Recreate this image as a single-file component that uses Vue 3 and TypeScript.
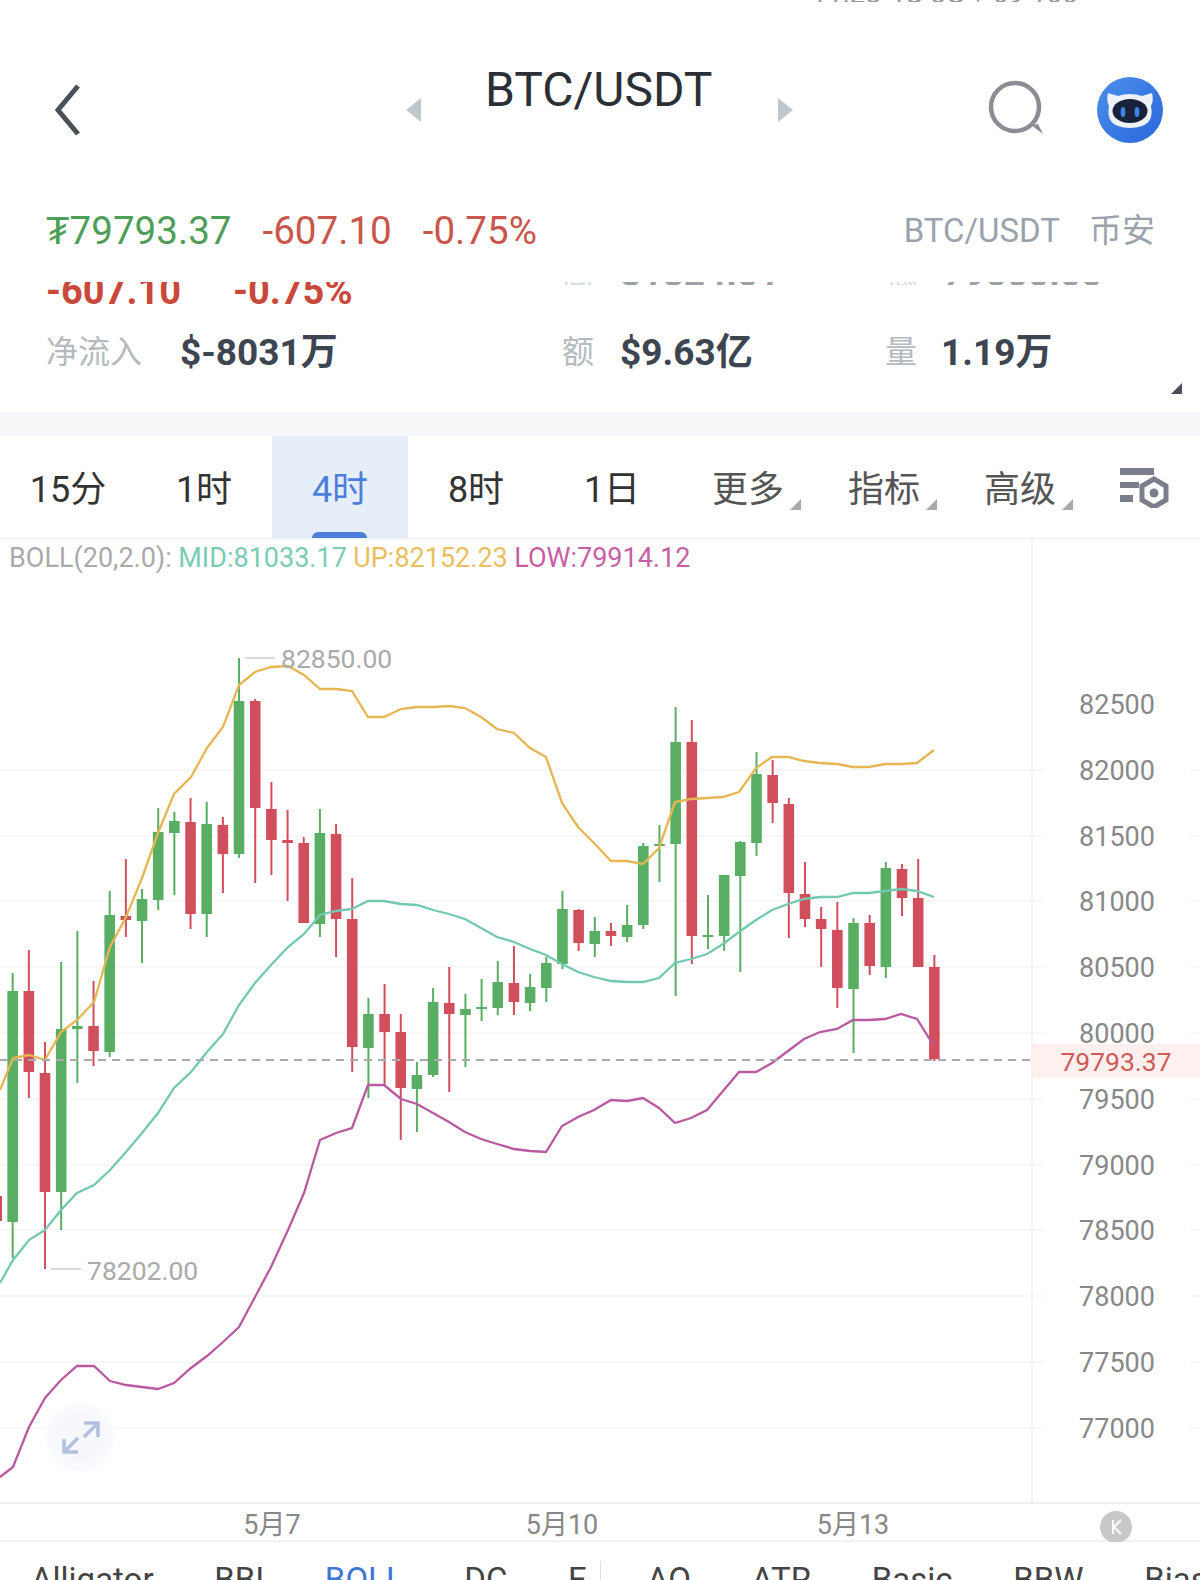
<script setup lang="ts">
type Candle = { x: number; up: boolean; wt: number; bt: number; bh: number; wb: number };

// [up, wick top, body top, body bottom, wick bottom], measured off the chart
type Row = [number, number, number, number, number];

const leftRows: Row[] = [
  [1, 973, 991, 1222, 1258],
  [0, 950, 991, 1072, 1098],
  [0, 1042, 1073, 1192, 1269],
  [1, 962, 1029, 1192, 1230],
  [1, 931, 1026, 1029, 1083],
  [0, 981, 1026, 1051, 1066],
  [1, 891, 915, 1052, 1057],
  [0, 859, 916, 920, 937],
  [1, 889, 899, 921, 963],
  [1, 808, 832, 900, 910],
  [1, 812, 821, 833, 895],
  [0, 798, 822, 914, 929],
  [1, 802, 824, 914, 937],
  [0, 817, 825, 854, 893],
  [1, 658, 701, 854, 858],
  [0, 699, 701, 808, 883],
  [0, 782, 809, 840, 875],
  [0, 810, 840, 843, 901],
  [0, 837, 843, 923, 923],
  [1, 809, 833, 924, 937],
  [0, 824, 834, 919, 957],
  [0, 878, 919, 1047, 1072],
  [1, 998, 1014, 1048, 1098],
  [0, 984, 1014, 1032, 1085],
  [0, 1014, 1032, 1088, 1140],
  [1, 1062, 1075, 1089, 1132],
  [1, 988, 1002, 1075, 1077],
  [0, 967, 1003, 1014, 1092],
  [1, 994, 1009, 1015, 1067],
  [1, 979, 1007, 1008, 1021],
  [1, 961, 982, 1008, 1015],
  [0, 946, 983, 1002, 1015],
];

const rightRows: Row[] = [
  [1, 974, 987, 1003, 1011],
  [1, 957, 963, 988, 1002],
  [1, 891, 909, 964, 969],
  [0, 909, 910, 943, 951],
  [1, 917, 931, 944, 957],
  [0, 923, 931, 936, 946],
  [1, 905, 925, 937, 942],
  [1, 843, 846, 925, 929],
  [1, 825, 844, 846, 882],
  [1, 707, 742, 844, 996],
  [0, 720, 742, 936, 964],
  [1, 895, 935, 936, 949],
  [1, 875, 875, 936, 951],
  [1, 841, 842, 876, 972],
  [1, 752, 774, 843, 856],
  [0, 760, 775, 803, 823],
  [0, 798, 804, 893, 938],
  [0, 862, 894, 919, 927],
  [0, 907, 919, 929, 967],
  [0, 902, 930, 988, 1008],
  [1, 918, 923, 989, 1053],
  [0, 915, 923, 966, 975],
  [1, 862, 868, 967, 978],
  [0, 864, 869, 898, 916],
  [0, 859, 898, 967, 967],
  [0, 955, 967, 1059, 1061],
];

const candles: Candle[] = [...leftRows, ...rightRows].map((r, i) => ({
  x: 12.67 + 16.17 * i,
  up: r[0] === 1,
  wt: r[1],
  bt: r[2],
  bh: r[3] - r[2],
  wb: r[4],
}));

const upper =
  "0,1090 13,1058 29,1055 45,1060 61,1032 77,1020 94,1002 110,947 126,917 142,878 158,833 174,794 191,777 207,748 223,727 239,685 255,672 271,667 288,666 304,675 320,689 336,689 352,691 368,717 384,717 401,709 417,707 433,707 449,706 465,708 481,717 497,729 514,733 530,748 546,757 562,803 578,827 594,843 611,861 627,861 643,864 659,848 675,802 691,799 707,798 723,797 739,792 756,768 772,757 788,757 804,761 820,763 837,764 853,767 869,767 885,764 901,764 917,763 934,750";
const mid =
  "0,1283 13,1260 29,1240 45,1230 61,1210 77,1193 94,1185 110,1170 126,1152 142,1133 158,1113 174,1088 191,1072 207,1052 223,1034 239,1005 255,983 271,965 288,947 304,934 320,915 336,911 352,909 368,901 384,901 401,904 417,905 433,910 449,914 465,919 481,928 497,937 514,942 530,949 546,955 562,964 578,972 594,977 611,981 627,982 643,982 659,978 675,963 691,959 707,954 723,944 739,932 756,920 772,910 788,904 804,899 820,897 837,897 853,893 869,893 885,891 901,889 917,891 934,897";
const lower =
  "0,1477 13,1467 29,1427 45,1398 61,1380 77,1366 94,1366 110,1381 126,1385 142,1387 158,1389 174,1383 191,1368 207,1356 223,1342 239,1327 255,1297 271,1267 288,1230 304,1193 320,1140 336,1133 352,1128 368,1085 384,1085 401,1099 417,1104 433,1113 449,1122 465,1132 481,1139 497,1144 514,1149 530,1151 546,1152 562,1126 578,1117 594,1110 611,1100 627,1101 643,1098 659,1108 675,1123 691,1118 707,1110 723,1091 739,1072 756,1072 772,1063 788,1051 804,1039 820,1032 837,1029 853,1020 869,1020 885,1019 901,1014 917,1019 929,1038 934,1045";

const axisYs = [704, 770, 836, 901, 967, 1033, 1099, 1165, 1230, 1296, 1362, 1428];
const gridYs = axisYs.slice(1);
const axis = [
  "82500", "82000", "81500", "81000", "80500", "80000",
  "79500", "79000", "78500", "78000", "77500", "77000",
];
const dates = [
  { x: 272, t: "5月7" },
  { x: 562, t: "5月10" },
  { x: 853, t: "5月13" },
];

const periods = ["15分", "1时", "4时", "8时", "1日"];
const menus = ["更多", "指标", "高级"];
const indLeft = ["Alligator", "BBI", "BOLL", "DC", "E"];
const indRight = ["AO", "ATR", "Basic", "BBW", "Bias"];
</script>

<template>
  <div class="page">
    <div class="status"><span>11:28 4G 5G ▾ 69 100</span></div>

    <header class="head">
      <svg class="back" width="40" height="60" viewBox="0 0 40 60">
        <path d="M26 6 L6 30 L26 54" fill="none" stroke="#4a5058" stroke-width="5" />
      </svg>
      <div class="symbol">
        <i class="tri tri--l"></i>
        <h1>BTC/USDT</h1>
        <i class="tri tri--r"></i>
      </div>
      <svg class="search" width="60" height="60" viewBox="0 0 60 60">
        <circle cx="27" cy="27" r="24" fill="none" stroke="#8a8d93" stroke-width="4.5" />
        <path d="M43 45 L55 54 L50 44 Z" fill="#8a8d93" />
      </svg>
      <svg class="bot" width="68" height="68" viewBox="0 0 68 68">
        <defs>
          <linearGradient id="botBg" x1="0" y1="0" x2="1" y2="1">
            <stop offset="0" stop-color="#4a90ea" />
            <stop offset="1" stop-color="#2b66dd" />
          </linearGradient>
        </defs>
        <circle cx="34" cy="34" r="33" fill="url(#botBg)" />
        <path
          d="M12 17 L22 20 Q34 16 46 20 L56 17 Q58 24 55 30 Q58 46 46 50 Q34 54 22 50 Q10 46 13 30 Q10 24 12 17 Z"
          fill="#eef2f6"
        />
        <ellipse cx="34" cy="35" rx="17.5" ry="12" fill="#18233b" />
        <ellipse cx="27" cy="36" rx="2.4" ry="5" fill="#3a86ee" />
        <ellipse cx="41" cy="36" rx="2.4" ry="5" fill="#3a86ee" />
      </svg>
    </header>

    <div class="quote">
      <span class="q-price">₮79793.37</span>
      <span class="q-chg">-607.10</span>
      <span class="q-pct">-0.75%</span>
      <span class="q-pair">BTC/USDT</span>
      <span class="q-ex">币安</span>
    </div>

    <section class="stats">
      <div class="row row--clip">
        <div class="col col--a"><b class="red">-607.10</b><b class="red gap">-0.75%</b></div>
        <div class="col col--b sliver"><span class="lbl">高</span><b class="val">81824.01</b></div>
        <div class="col col--c sliver"><span class="lbl">低</span><b class="val">79000.00</b></div>
      </div>
      <div class="row row--main">
        <div class="col col--a"><span class="lbl">净流入</span><b class="val">$-8031万</b></div>
        <div class="col col--b"><span class="lbl">额</span><b class="val">$9.63亿</b></div>
        <div class="col col--c"><span class="lbl">量</span><b class="val">1.19万</b></div>
      </div>
      <i class="corner"></i>
    </section>

    <div class="band"></div>

    <nav class="tabs">
      <div v-for="p in periods" :key="p" class="tab" :class="{ 'tab--on': p === '4时' }">{{ p }}</div>
      <div v-for="m in menus" :key="m" class="tab tab--menu">{{ m }}<i class="mark"></i></div>
      <svg class="conf" width="52" height="40" viewBox="0 0 52 40">
        <rect x="0" y="0" width="34" height="7" fill="#7b7f8c" />
        <rect x="0" y="14" width="19" height="6" fill="#7b7f8c" />
        <rect x="0" y="27" width="13" height="7" fill="#7b7f8c" />
        <path d="M34 11 L46 18 V32 L34 39 L22 32 V18 Z" fill="none" stroke="#7b7f8c" stroke-width="5" />
        <circle cx="34" cy="25" r="4.5" fill="#7b7f8c" />
      </svg>
    </nav>

    <div class="chart">
      <div class="legend">
        <span class="c-grey">BOLL(20,2.0):</span>
        <span class="c-mid">MID:81033.17</span>
        <span class="c-up">UP:82152.23</span>
        <span class="c-low">LOW:79914.12</span>
      </div>

      <svg class="plot" width="1200" height="1004" viewBox="0 538 1200 1004">
        <defs>
          <radialGradient id="expandBg">
            <stop offset="0.7" stop-color="#f6f8fd" />
            <stop offset="1" stop-color="#fbfcfe" />
          </radialGradient>
        </defs>
        <line x1="0" y1="538.5" x2="1200" y2="538.5" stroke="#f0f0f0" stroke-width="1.5" />
        <line v-for="y in gridYs" :key="y" x1="0" :y1="y" x2="1200" :y2="y" stroke="#f4f4f4" stroke-width="1.5" />
        <line x1="1032" y1="538" x2="1032" y2="1503" stroke="#f0f0f0" stroke-width="1.5" />
        <line x1="0" y1="1503" x2="1200" y2="1503" stroke="#f0f0f0" stroke-width="2" />
        <line x1="0" y1="1541" x2="1200" y2="1541" stroke="#f2f2f2" stroke-width="2" />

        <circle cx="80" cy="1437" r="35" fill="url(#expandBg)" />
        <path
          d="M84 1423 H98 V1437 M98 1423 L84 1437 M64 1439 V1452 H78 M64 1452 L78 1438"
          fill="none"
          stroke="#b2c0e0"
          stroke-width="3.5"
        />

        <rect x="0" y="1196" width="2" height="25" fill="#d14f5c" />
        <g v-for="c in candles" :key="c.x" :fill="c.up ? '#5aae63' : '#d14f5c'">
          <rect :x="c.x - 1" :y="c.wt" width="2" :height="c.wb - c.wt" />
          <rect :x="c.x - 5.3" :y="c.bt" width="10.6" :height="Math.max(c.bh, 2)" />
        </g>

        <polyline :points="upper" fill="none" stroke="#e6b652" stroke-width="2.3" />
        <polyline :points="mid" fill="none" stroke="#72c9b0" stroke-width="2.3" />
        <polyline :points="lower" fill="none" stroke="#b95aa0" stroke-width="2.3" />

        <line x1="0" y1="1060" x2="1032" y2="1060" stroke="#aaaaaa" stroke-width="2" stroke-dasharray="8 6" />
        <rect x="1032" y="1044" width="168" height="34" fill="#fdf0ef" />
        <text class="tag" x="1116" y="1071">79793.37</text>

        <line x1="245" y1="658" x2="275" y2="658" stroke="#cccccc" stroke-width="1.5" />
        <text class="mark-txt" x="281" y="668">82850.00</text>
        <line x1="51" y1="1269" x2="81" y2="1269" stroke="#cccccc" stroke-width="1.5" />
        <text class="mark-txt" x="87" y="1280">78202.00</text>

        <g v-for="(a, i) in axis" :key="a">
          <rect x="1044" :y="axisYs[i] - 4" width="146" height="8" fill="#fff" />
          <text class="ax" x="1117" :y="axisYs[i] + 9.5">{{ a }}</text>
        </g>
        <text v-for="d in dates" :key="d.t" class="date" :x="d.x" y="1534">{{ d.t }}</text>

        <circle cx="1116" cy="1527" r="16" fill="#c8c8c8" />
        <path d="M1113 1520 V1534 M1121 1520 L1114 1527 L1121 1534" fill="none" stroke="#fff" stroke-width="2" />
      </svg>

      <div class="inds">
        <span v-for="n in indLeft" :key="n" :class="{ 'ind--on': n === 'BOLL' }">{{ n }}</span>
        <i class="split"></i>
        <span v-for="n in indRight" :key="n">{{ n }}</span>
      </div>
    </div>
  </div>
</template>

<style>
html,
body {
  margin: 0;
  background: #fff;
}
</style>

<style scoped>
.page {
  width: 1200px;
  height: 1580px;
  overflow: hidden;
  background: #fff;
  font-family: Roboto, "Noto Sans CJK SC", sans-serif;
}

.status {
  height: 2px;
  overflow: hidden;
  display: flex;
  align-items: flex-end;
  justify-content: flex-end;
  padding-right: 122px;
  font-size: 28px;
  line-height: 16px;
  color: #999;
}

.head {
  height: 100px;
  margin-top: 58px;
  display: flex;
  align-items: center;
  position: relative;
}

.back {
  margin-left: 52px;
}

.symbol {
  display: flex;
  align-items: center;
  gap: 66px;
  margin-left: 314px;
  width: 387px;
}

.symbol h1 {
  margin: -42px 0 0 -2px;
  font-size: 48px;
  font-weight: 400;
  color: #2c2f36;
  white-space: nowrap;
}

.tri {
  width: 0;
  height: 0;
  flex: none;
  border-top: 12px solid transparent;
  border-bottom: 12px solid transparent;
}

.tri--l {
  border-right: 15px solid #c0c6cc;
}

.tri--r {
  border-left: 15px solid #c0c6cc;
}

.search {
  margin-left: 195px;
}

.bot {
  margin-left: 48px;
}

.quote {
  height: 46px;
  margin-top: 47px;
  padding: 0 45px 0 46px;
  display: flex;
  align-items: center;
  font-size: 38.6px;
  white-space: nowrap;
}

.q-price {
  color: #4f9e58;
}

.q-chg,
.q-pct {
  color: #c9564c;
  margin-left: 31px;
}

.q-pair {
  margin-left: auto;
  font-size: 33px;
  color: #9aa3ad;
}

.q-ex {
  margin-left: 29px;
  margin-bottom: 4px;
  font-size: 33px;
  color: #9aa3ad;
}

.stats {
  height: 130px;
  margin-top: 29px;
  overflow: hidden;
  position: relative;
}

.row {
  display: flex;
  align-items: center;
  font-size: 32px;
  white-space: nowrap;
}

.row--clip {
  height: 46px;
  margin-top: -15px;
  align-items: flex-start;
  padding-top: 5px;
}

.row--main {
  height: 46px;
  margin-top: 8px;
}

.col {
  display: flex;
  align-items: center;
  gap: 26px;
}

.col--a {
  width: 562px;
  padding-left: 46px;
  box-sizing: border-box;
  gap: 37px;
}

.row--main .col--a {
  gap: 38px;
}

.col--b {
  width: 323px;
  padding-left: 0;
}

.row--main .col--c {
  gap: 24px;
}

.lbl {
  color: #b4bac0;
}

.val {
  color: #3d4550;
  font-weight: 700;
  font-size: 37px;
}

.red {
  color: #c9483c;
  font-size: 38px;
  line-height: 38px;
  margin-top: 0;
}

.gap {
  margin-left: 15px;
}

.sliver {
  height: 3px;
  margin-top: 10px;
  overflow: hidden;
  align-items: flex-end;
  line-height: 22px;
  opacity: 0.5;
}

.corner {
  position: absolute;
  right: 18px;
  bottom: 18px;
  width: 0;
  height: 0;
  border-left: 11px solid transparent;
  border-bottom: 11px solid #4a4f58;
}

.band {
  height: 24px;
  background: #f5f7f9;
}

.tabs {
  height: 102px;
  display: flex;
  position: relative;
  font-size: 36px;
  color: #333;
}

.tab {
  width: 136px;
  position: relative;
  display: flex;
  align-items: center;
  justify-content: center;
  padding-bottom: 2px;
  box-sizing: border-box;
  flex: none;
}

.tab--on {
  color: #4a7fdc;
  background: #e6eefa;
}

.tab--on::after {
  content: "";
  position: absolute;
  left: 40px;
  bottom: 0;
  width: 55px;
  height: 6px;
  border-radius: 6px 6px 0 0;
  background: #4d7fdb;
}

.tab--menu {
  color: #555;
}

.mark {
  position: absolute;
  right: 15px;
  bottom: 28px;
  width: 0;
  height: 0;
  border-left: 11px solid transparent;
  border-bottom: 11px solid #a8a8a8;
}

.conf {
  margin: 32px 0 0 32px;
}

.chart {
  position: relative;
}

.legend {
  position: absolute;
  left: 9px;
  top: 5px;
  display: flex;
  gap: 6.5px;
  font-size: 27px;
  line-height: 30px;
  white-space: nowrap;
}

.c-grey {
  color: #aaa;
}

.c-mid {
  color: #7accb4;
}

.c-up {
  color: #e8c060;
}

.c-low {
  color: #c75fa5;
}

.plot {
  display: block;
}

.plot text {
  font-family: Roboto, "Noto Sans CJK SC", sans-serif;
}

.ax {
  font-size: 27px;
  fill: #888;
  text-anchor: middle;
}

.tag {
  font-size: 26.5px;
  fill: #cf5a58;
  text-anchor: middle;
}

.mark-txt {
  font-size: 26.5px;
  fill: #aaa;
}

.date {
  font-size: 27px;
  fill: #888;
  text-anchor: middle;
}

.inds {
  height: 38px;
  display: flex;
  gap: 60.6px;
  padding-left: 31px;
  font-size: 33px;
  line-height: 76px;
  color: #444;
  white-space: nowrap;
}

.ind--on {
  color: #3d78d8;
}

.split {
  flex: none;
  width: 1px;
  height: 30px;
  margin: 19px -15px 0 -47px;
  background: #ddd;
}
</style>
